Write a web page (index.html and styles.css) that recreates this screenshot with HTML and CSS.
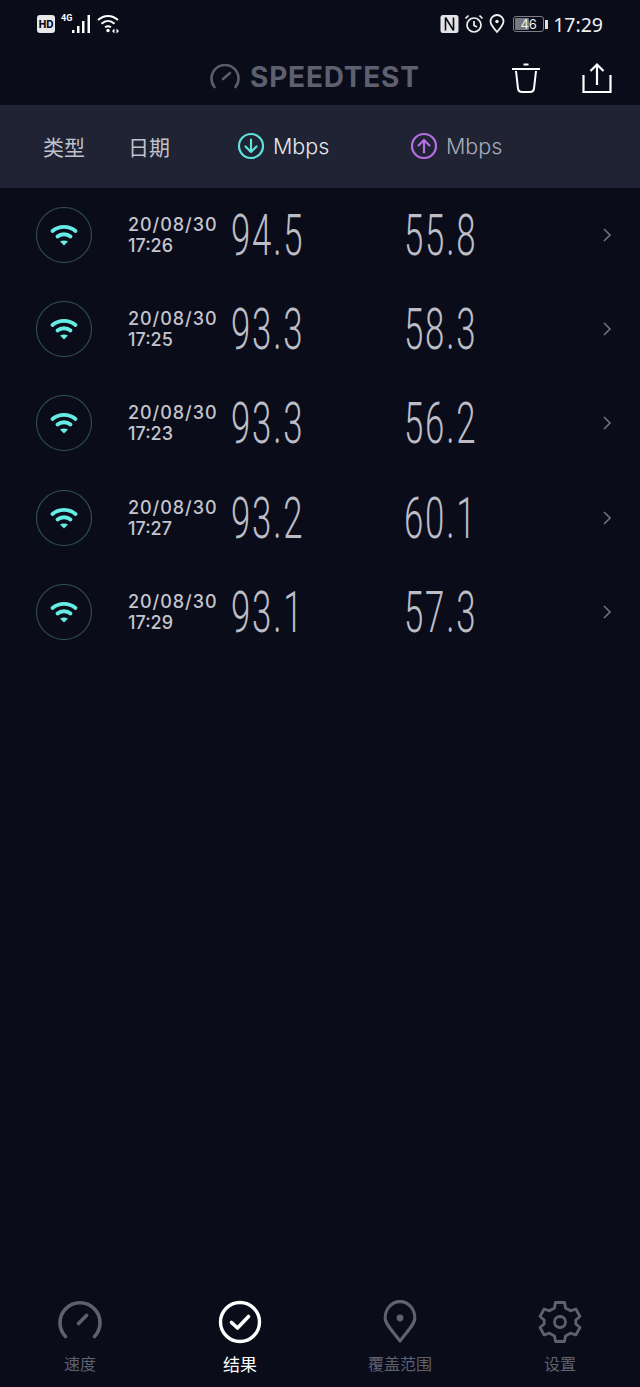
FILE: index.html
```html
<!DOCTYPE html>
<html lang="zh-CN">
<head>
    <meta charset="UTF-8">
    <meta name="viewport" content="width=device-width, initial-scale=1.0">
    <title>Speedtest Results</title>
    <link rel="stylesheet" href="styles.css">
</head>
<body>
    <div class="app">
        <!-- Status bar -->
        <div class="status-bar">
            <div class="status-left">
                <span class="hd">HD</span>
                <span class="net">4G</span>
                <svg class="signal" width="20" height="20" viewBox="0 0 20 20" fill="#fff">
                    <rect x="0" y="16" width="2.500" height="3"/>
                    <rect x="5" y="12" width="2.500" height="7"/>
                    <rect x="10" y="7" width="2.500" height="12"/>
                    <rect x="15.500" y="1" width="2.500" height="18"/>
                </svg>
                <svg class="wifi-small" width="24" height="20" viewBox="0 0 24 20" fill="none" stroke="#fff" stroke-width="2">
                    <path d="M1 6C7 .5 15 .5 21 6"/>
                    <path d="M4.500 9.800C8.500 6 13.500 6 17.500 9.800"/>
                    <path d="M8 13.300C10 11.800 12 11.800 14 13.300"/>
                    <circle cx="11" cy="16.500" r="1.700" fill="#fff" stroke="none"/>
                    <path d="M17.500 14.500l-2.500 2.500 2.500 2.500zM19.500 14.500l2.500 2.500-2.500 2.500z" fill="#fff" stroke="none"/>
                </svg>
            </div>
            <div class="status-right">
                <svg width="19" height="20" viewBox="0 0 19 20">
                    <rect x="0.500" y="1" width="18" height="18" rx="2.500" fill="#e4e4e6"/>
                    <path d="M5.500 3.500v13M13.500 3.500v13M5.500 3.500l8 13" fill="none" stroke="#0a0c1a" stroke-width="1.600"/>
                </svg>
                <svg width="20" height="20" viewBox="0 0 20 20" fill="none" stroke="#f0f0f0" stroke-width="1.700">
                    <circle cx="10" cy="11" r="7"/>
                    <path d="M10 7v4.500l3 1.500M1.500 4.500l3-3M18.500 4.500l-3-3"/>
                </svg>
                <svg width="16" height="20" viewBox="0 0 16 20" fill="none" stroke="#f0f0f0" stroke-width="1.800">
                    <path d="M8 18C4 13.500 1.500 10.500 1.500 7.500a6.500 6.500 0 0 1 13 0C14.500 10.500 12 13.500 8 18z"/>
                    <circle cx="8" cy="7.500" r="1.700" fill="#f0f0f0" stroke="none"/>
                </svg>
                <div class="battery">
                    <div class="battery-box">
                        <span class="battery-fill"></span>
                        <span class="battery-num">46</span>
                    </div>
                    <span class="battery-tip"></span>
                </div>
                <span class="clock">17:29</span>
            </div>
        </div>

        <!-- Title bar -->
        <div class="top-bar">
            <div class="brand">
                <svg width="30" height="26" viewBox="0 0 30 26" fill="none" stroke="#5a5d6b" stroke-width="2.600" stroke-linecap="round">
                    <path d="M4.500 23A13.500 13.500 0 1 1 25.500 23"/>
                    <path d="M13 15L20 9"/>
                </svg>
                <span class="brand-name">SPEEDTEST</span>
            </div>
            <div class="top-actions">
                <svg width="30" height="32" viewBox="0 0 30 32" fill="none" stroke="#fff" stroke-width="2">
                    <path d="M1 7H29"/>
                    <path d="M12.500 2.500H17.500"/>
                    <path d="M5 9L7 26.500Q7.500 30 11 30H19Q22.500 30 23 26.500L25 9"/>
                </svg>
                <svg width="30" height="32" viewBox="0 0 30 32" fill="none" stroke="#fff" stroke-width="2.200">
                    <path d="M1.500 13V30H28.500V13"/>
                    <path d="M15 23V2.500M8.500 9L15 2.500L21.500 9"/>
                </svg>
            </div>
        </div>

        <!-- Column headings -->
        <div class="col-head">
            <span class="head-type">类型</span>
            <span class="head-date">日期</span>
            <div class="head-speed head-down">
                <svg width="28" height="28" viewBox="0 0 28 28" fill="none" stroke="#5fe3dc" stroke-width="2.200" stroke-linecap="round" stroke-linejoin="round">
                    <circle cx="14" cy="14" r="12"/>
                    <path d="M14 7.500V20M8.500 14.500L14 20L19.500 14.500"/>
                </svg>
                <span>Mbps</span>
            </div>
            <div class="head-speed head-up">
                <svg width="28" height="28" viewBox="0 0 28 28" fill="none" stroke="#b86fe6" stroke-width="2.200" stroke-linecap="round" stroke-linejoin="round">
                    <circle cx="14" cy="14" r="12"/>
                    <path d="M14 20.500V8M8.500 13.500L14 8L19.500 13.500"/>
                </svg>
                <span>Mbps</span>
            </div>
        </div>

        <!-- Results -->
        <div class="results" id="results"></div>

        <!-- Bottom nav -->
        <div class="tabs">
            <div class="tab">
                <svg width="44" height="44" viewBox="0 0 44 44" fill="none" stroke="#5f616f" stroke-width="3.600" stroke-linecap="round">
                    <path d="M7.500 36.500A20 20 0 1 1 36.500 36.500"/>
                    <path d="M20.500 23.500L28.500 15.500"/>
                </svg>
                <span>速度</span>
            </div>
            <div class="tab active">
                <svg width="44" height="44" viewBox="0 0 44 44" fill="none" stroke="#fff">
                    <circle cx="22" cy="22" r="19.500" stroke-width="3.400"/>
                    <path d="M13.500 22.500L19.500 28L30.500 16.500" stroke-width="3.600" stroke-linecap="round" stroke-linejoin="round"/>
                </svg>
                <span>结果</span>
            </div>
            <div class="tab">
                <svg width="44" height="44" viewBox="0 0 44 44" fill="none" stroke="#5f616f" stroke-width="3.400" stroke-linejoin="round">
                    <path d="M22 41C12 29 5.500 24 5.500 18a16.500 16.500 0 0 1 33 0C38.500 24 32 29 22 41z" transform="translate(2.200 0) scale(.9 1)"/>
                    <circle cx="22" cy="18" r="3.400" fill="#5f616f" stroke="none"/>
                </svg>
                <span>覆盖范围</span>
            </div>
            <div class="tab">
                <svg width="44" height="44" viewBox="0 0 44 44" fill="none" stroke="#5f616f" stroke-width="2.800" stroke-linejoin="round">
                    <path d="M17.500 2.500H26.500L27.500 8L32.500 10.800L37.800 9L42 16.500L37.800 20L37.800 24L42 27.500L37.800 35L32.500 33.200L27.500 36L26.500 41.500H17.500L16.500 36L11.500 33.200L6.200 35L2 27.500L6.200 24L6.200 20L2 16.500L6.200 9L11.500 10.800L16.500 8Z"/>
                    <circle cx="22" cy="22" r="5.500"/>
                </svg>
                <span>设置</span>
            </div>
        </div>
    </div>

    <script>
        const rows = [
            ['17:26', '94.5', '55.8'],
            ['17:25', '93.3', '58.3'],
            ['17:23', '93.3', '56.2'],
            ['17:27', '93.2', '60.1'],
            ['17:29', '93.1', '57.3']
        ];

        const wifiIcon = `
            <svg class="wifi" width="56" height="56" viewBox="0 0 56 56" fill="none">
                <circle cx="28" cy="28" r="27.500" stroke="#2d4a50" stroke-width="1.200"/>
                <g stroke="#66ece4" stroke-width="3.800" stroke-linecap="round">
                    <path d="M16.500 24C23 18.500 33 18.500 39.500 24"/>
                    <path d="M21.500 29.500C25 26.500 31 26.500 34.500 29.500"/>
                </g>
                <path d="M24 34.500Q28 32.500 32 34.500L28 38.500Z" fill="#66ece4"/>
            </svg>`;

        const list = document.getElementById('results');
        rows.forEach(r => {
            const row = document.createElement('div');
            row.className = 'row';
            row.innerHTML = `
                ${wifiIcon}
                <div class="when"><div class="when-date">20/08/30</div><div>${r[0]}</div></div>
                <div class="num">${r[1]}</div>
                <div class="num">${r[2]}</div>
                <svg class="chevron" width="8" height="14" viewBox="0 0 8 14" fill="none" stroke="#6d6f7b" stroke-width="1.600"><path d="M1 1L7 7L1 13"/></svg>`;
            list.appendChild(row);
        });
    </script>
</body>
</html>
```

FILE: styles.css
```css
body {
    margin: 0;
    background-color: #0a0c1a;
    font-family: Inter, "Noto Sans CJK SC", sans-serif;
}
.app {
    display: flex;
    flex-direction: column;
    height: 1387px;
    overflow: hidden;
}
.status-bar {
    display: flex;
    justify-content: space-between;
    align-items: center;
    height: 48px;
    padding: 0 37px;
    color: #f0f0f0;
}
.status-left, .status-right {
    display: flex;
    align-items: center;
}
.hd {
    width: 18px;
    height: 18px;
    line-height: 18px;
    border-radius: 3px;
    background-color: #e8e8ea;
    color: #0a0c1a;
    font-size: 10px;
    font-weight: 800;
    text-align: center;
}
.net {
    width: 11px;
    margin: -12px 0 0 6px;
    font-family: Roboto, sans-serif;
    font-size: 9px;
    font-weight: 700;
    color: #fff;
}
.wifi-small {
    margin-left: 5px;
}
.status-right {
    gap: 5px;
}
.battery {
    display: flex;
    align-items: center;
    margin-left: 3px;
}
.battery-box {
    position: relative;
    width: 29px;
    height: 14px;
    border: 1px solid #7d7e88;
    border-radius: 3px;
}
.battery-fill {
    position: absolute;
    left: 1px;
    top: 1px;
    bottom: 1px;
    width: 14px;
    background-color: #77787f;
    border-radius: 1px;
}
.battery-num {
    position: absolute;
    left: 0;
    right: 0;
    text-align: center;
    font-size: 13px;
    line-height: 14px;
    color: #f0f0f0;
}
.battery-tip {
    width: 3px;
    height: 9px;
    margin-left: 1px;
    background-color: #e0e0e0;
}
.clock {
    font-family: "Noto Sans", sans-serif;
    font-size: 19.500px;
    color: #f0f0f0;
}
.top-bar {
    display: flex;
    align-items: center;
    height: 57px;
    padding: 0 28px 0 210px;
}
.brand {
    display: flex;
    align-items: center;
    gap: 10px;
}
.brand-name {
    font-size: 28px;
    font-weight: 700;
    color: #5d606e;
    letter-spacing: 0.800px;
}
.top-actions {
    display: flex;
    gap: 41px;
    margin-left: auto;
    margin-top: 2px;
}
.col-head {
    display: flex;
    align-items: center;
    box-sizing: border-box;
    height: 83px;
    padding-bottom: 2px;
    background-color: #1f2334;
    color: #bfc1cb;
    font-size: 21px;
}
.head-type {
    width: 86px;
    padding-left: 43px;
}
.head-date {
    width: 109px;
    margin-left: -1px;
}
.head-speed {
    display: flex;
    align-items: center;
    gap: 8px;
    font-size: 21.500px;
    font-weight: 300;
}
.head-down {
    width: 173px;
    color: #e8e9ee;
}
.head-up {
    color: #a9abb8;
}
.results {
    flex: 1;
}
.row {
    display: flex;
    align-items: center;
    height: 94.200px;
    padding-left: 36px;
}
.wifi {
    flex-shrink: 0;
}
.when {
    width: 103px;
    margin-left: 36px;
    font-size: 18px;
    line-height: 21px;
    font-weight: 500;
    color: #c4c5cc;
}
.when-date {
    letter-spacing: 0.950px;
}
.num {
    width: 173px;
    font-family: Roboto, sans-serif;
    font-size: 58px;
    font-weight: 300;
    letter-spacing: 3px;
    color: #bcbdc7;
    transform: scaleX(0.6);
    transform-origin: left center;
}
.chevron {
    margin-left: 26px;
}
.tabs {
    display: grid;
    grid-template-columns: repeat(4, 1fr);
    height: 87px;
}
.tab {
    display: flex;
    flex-direction: column;
    align-items: center;
    gap: 7px;
    font-size: 16px;
    color: #5f616f;
}
.tab.active {
    color: #fff;
    font-size: 17px;
}
```
